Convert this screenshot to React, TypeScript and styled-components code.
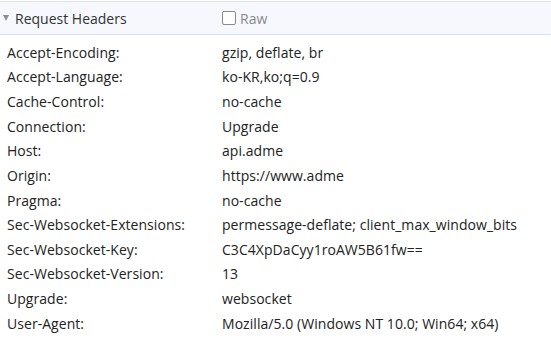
import React from "react";
import styled, { createGlobalStyle } from "styled-components";

const Global = createGlobalStyle`
  html, body { margin: 0; padding: 0; background: #ffffff; }
  body { font-family: "Open Sans", "Noto Sans", sans-serif; }
`;

const Panel = styled.div`
  width: 551px;
  height: 340px;
  overflow: hidden;
  background: #ffffff;
  padding-top: 1px;
  box-sizing: border-box;
`;

const Header = styled.div`
  display: grid;
  grid-template-columns: 222px 1fr;
  align-items: center;
  height: 32px;
  background: #f7f8fd;
  border-top: 1px solid #e2e2ef;
  border-bottom: 1px solid #d6e0f9;
  font-size: 14px;
`;

const Toggle = styled.div`
  display: flex;
  align-items: center;
  gap: 6px;
  padding-left: 3px;
  color: #333333;
`;

const Triangle = styled.span`
  width: 0;
  height: 0;
  border-left: 3.5px solid transparent;
  border-right: 3.5px solid transparent;
  border-top: 6px solid #8f8f8f;
`;

const RawLabel = styled.label`
  display: flex;
  align-items: center;
  gap: 4px;
  color: #8a8a8a;
`;

const Box = styled.span`
  width: 12px;
  height: 12px;
  border: 1px solid #8a8a8a;
  border-radius: 2px;
  background: #ffffff;
`;

const List = styled.div`
  padding-top: 5px;
`;

const Row = styled.div`
  display: grid;
  grid-template-columns: 215px 1fr;
  padding-left: 7px;
  height: 24.64px;
  align-items: center;
  font-size: 14px;
  letter-spacing: 0.05px;
  color: #222222;
  white-space: nowrap;
`;

const rows: [string, string][] = [
  ["Accept-Encoding:", "gzip, deflate, br"],
  ["Accept-Language:", "ko-KR,ko;q=0.9"],
  ["Cache-Control:", "no-cache"],
  ["Connection:", "Upgrade"],
  ["Host:", "api.adme"],
  ["Origin:", "https://www.adme"],
  ["Pragma:", "no-cache"],
  ["Sec-Websocket-Extensions:", "permessage-deflate; client_max_window_bits"],
  ["Sec-Websocket-Key:", "C3C4XpDaCyy1roAW5B61fw=="],
  ["Sec-Websocket-Version:", "13"],
  ["Upgrade:", "websocket"],
  ["User-Agent:", "Mozilla/5.0 (Windows NT 10.0; Win64; x64)"],
];

export default function App() {
  return (
    <>
      <Global />
      <Panel>
        <Header>
          <Toggle>
            <Triangle />
            <span>Request Headers</span>
          </Toggle>
          <RawLabel>
            <Box />
            <span>Raw</span>
          </RawLabel>
        </Header>
        <List>
          {rows.map(([k, v]) => (
            <Row key={k}>
              <span>{k}</span>
              <span>{v}</span>
            </Row>
          ))}
        </List>
      </Panel>
    </>
  );
}
